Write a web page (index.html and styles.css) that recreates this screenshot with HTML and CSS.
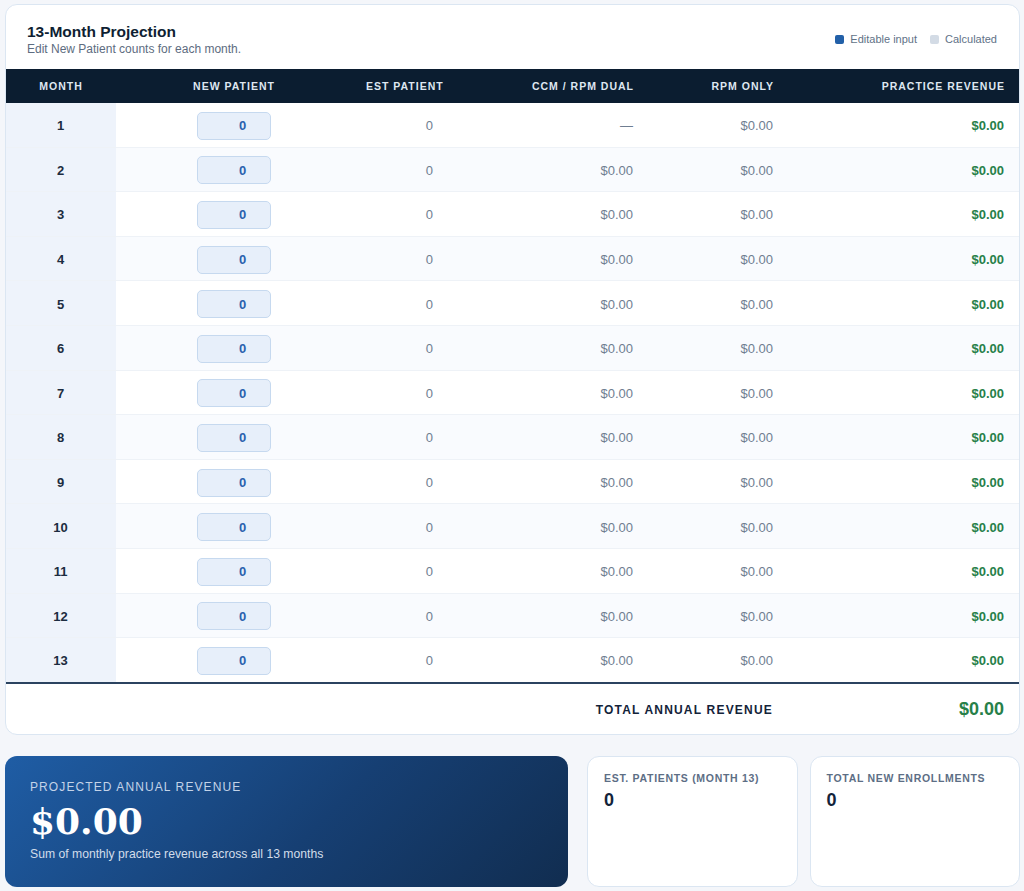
FILE: index.html
```html
<!DOCTYPE html>
<html lang="en">
<head>
  <meta charset="UTF-8">
  <title>13-Month Projection</title>
  <link rel="stylesheet" href="styles.css">
</head>
<body>
  <div class="card projection">
    <div class="card-head">
      <div>
        <h2>13-Month Projection</h2>
        <p class="sub">Edit New Patient counts for each month.</p>
      </div>
      <div class="legend">
        <span class="key"><i class="swatch edit"></i>Editable input</span>
        <span class="key"><i class="swatch calc"></i>Calculated</span>
      </div>
    </div>
    <table class="grid">
      <colgroup>
        <col style="width:110px">
        <col style="width:236px">
        <col style="width:96px">
        <col style="width:200px">
        <col style="width:140px">
        <col>
      </colgroup>
      <thead>
        <tr>
          <th class="c">Month</th>
          <th class="c">New Patient</th>
          <th>Est Patient</th>
          <th>CCM / RPM Dual</th>
          <th>RPM Only</th>
          <th>Practice Revenue</th>
        </tr>
      </thead>
      <tbody id="rows"></tbody>
      <tfoot>
        <tr>
          <td colspan="5" class="total-label">Total Annual Revenue</td>
          <td class="total-value">$0.00</td>
        </tr>
      </tfoot>
    </table>
  </div>

  <div class="summary">
    <div class="hero">
      <div class="hero-label">Projected Annual Revenue</div>
      <div class="hero-value">$0.00</div>
      <div class="hero-note">Sum of monthly practice revenue across all 13 months</div>
    </div>
    <div class="stats">
      <div class="card stat">
        <div class="stat-label">Est. Patients (Month 13)</div>
        <div class="stat-value">0</div>
      </div>
      <div class="card stat">
        <div class="stat-label">Total New Enrollments</div>
        <div class="stat-value">0</div>
      </div>
    </div>
  </div>

  <script>
    const rows = document.getElementById("rows");
    let html = "";
    for (let m = 1; m <= 13; m++) {
      html += `
        <tr>
          <td class="month">${m}</td>
          <td class="c"><input class="np" type="text" value="0"></td>
          <td class="calc">0</td>
          <td class="calc">${m === 1 ? "—" : "$0.00"}</td>
          <td class="calc">$0.00</td>
          <td class="rev">$0.00</td>
        </tr>`;
    }
    rows.innerHTML = html;
  </script>
</body>
</html>
```

FILE: styles.css
```css
body {
  font-family: 'Liberation Sans', Arial, sans-serif;
  background: #f4f6fa;
  margin: 0;
  padding: 4px 4px 0 5px;
  color: #13233a;
}

.card {
  background: #fff;
  border: 1px solid #dbe6f2;
  border-radius: 12px;
}

.projection {
  overflow: hidden;
}

.card-head {
  display: flex;
  justify-content: space-between;
  align-items: center;
  padding: 17px 22px 13px 21px;
}

h2 {
  margin: 0;
  font-size: 15.5px;
  line-height: 19px;
  color: #0f1f33;
}

.sub {
  margin: 1px 0 0;
  font-size: 12px;
  line-height: 14px;
  color: #5d6c80;
}

.legend {
  display: flex;
  gap: 13px;
  font-size: 11px;
  color: #617287;
}

.key {
  display: flex;
  align-items: center;
  gap: 6px;
}

.swatch {
  width: 9px;
  height: 9px;
  border-radius: 2px;
}

.swatch.edit { background: #2260a8; }
.swatch.calc { background: #d3dbe5; }

.grid {
  width: 100%;
  border-collapse: collapse;
  table-layout: fixed;
}

.grid th {
  background: #0b1d30;
  color: #dfe7f0;
  font-size: 10.5px;
  font-weight: bold;
  letter-spacing: 1px;
  text-transform: uppercase;
  text-align: right;
  white-space: nowrap;
  height: 34px;
  padding: 0 14px;
}

.grid td {
  height: 41.6px;
  padding: 2px 15px 0 14px;
  font-size: 13px;
  text-align: right;
  border-top: 1px solid #eef2f7;
}

.grid tbody tr:first-child td { border-top: none; }

.grid tbody tr:nth-child(even) { background: #f9fbfe; }

.grid .c { text-align: center; }

.grid .month {
  background: #eef3fb;
  font-weight: bold;
  color: #1c2c40;
  text-align: center;
}

.np {
  width: 74px;
  height: 28px;
  box-sizing: border-box;
  background: #e7effa;
  border: 1px solid #c6d9ef;
  border-radius: 5px;
  font-family: inherit;
  font-size: 13px;
  font-weight: bold;
  color: #2a62ae;
  text-align: center;
  padding: 0 0 0 18px;
}

.calc { color: #6f7e91; }

.rev {
  color: #278049;
  font-weight: bold;
}

.grid tfoot td {
  border-top: 2px solid #2b4360;
  height: 48px;
  padding: 2px 15px 0 14px;
}

.grid .total-label {
  font-size: 12px;
  font-weight: bold;
  letter-spacing: 1.2px;
  text-transform: uppercase;
  color: #13233a;
}

.grid .total-value {
  font-size: 18px;
  font-weight: bold;
  color: #278049;
}

.summary {
  display: grid;
  grid-template-columns: 563px 1fr;
  gap: 19px;
  margin-top: 21px;
}

.hero {
  background: linear-gradient(135deg, #1f5da5 0%, #163f73 55%, #112d50 100%);
  border-radius: 12px;
  color: #fff;
  padding: 24px 25px 22px;
  height: 131px;
  box-sizing: border-box;
}

.hero-label {
  font-size: 12px;
  letter-spacing: 1.1px;
  text-transform: uppercase;
  color: #c3d3e8;
}

.hero-value {
  font-family: 'DejaVu Serif', 'Liberation Serif', serif;
  font-weight: bold;
  font-size: 36px;
  line-height: 44px;
  margin-top: 5px;
}

.hero-note {
  font-size: 12.2px;
  color: #d2ddea;
  margin-top: 4px;
}

.stats {
  display: grid;
  grid-template-columns: 1fr 1fr;
  gap: 12px;
}

.stat {
  height: 131px;
  box-sizing: border-box;
  padding: 15px 16px;
}

.stat-label {
  font-size: 10.5px;
  font-weight: bold;
  letter-spacing: 0.7px;
  text-transform: uppercase;
  color: #5d6e85;
}

.stat-value {
  font-size: 18px;
  font-weight: bold;
  margin-top: 6px;
  color: #13233a;
}
```
